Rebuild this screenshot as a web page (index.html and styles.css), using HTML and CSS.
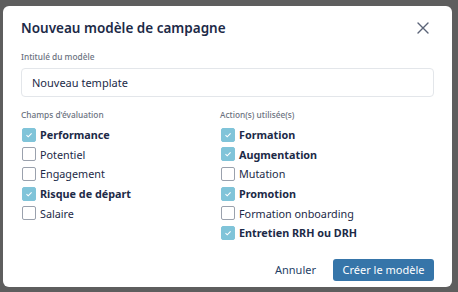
FILE: index.html
```html
<!DOCTYPE html>
<html lang="fr">
<head>
    <meta charset="UTF-8">
    <title>Nouveau modèle de campagne</title>
    <link rel="stylesheet" href="styles.css">
</head>
<body>
    <div class="modal">
        <!-- Header -->
        <div class="modal-header">
            <h2>Nouveau modèle de campagne</h2>
            <button class="close" aria-label="Fermer">
                <svg width="12" height="12" viewBox="0 0 12 12">
                    <path d="M1 1L11 11M11 1L1 11" stroke="#5b6478" stroke-width="1.4" stroke-linecap="round"/>
                </svg>
            </button>
        </div>

        <!-- Nom du modèle -->
        <label class="field-label">Intitulé du modèle</label>
        <div class="input">Nouveau template</div>

        <!-- Colonnes -->
        <div class="columns">
            <div class="column">
                <div class="field-label">Champs d'évaluation</div>
                <div class="check checked">Performance</div>
                <div class="check">Potentiel</div>
                <div class="check">Engagement</div>
                <div class="check checked">Risque de départ</div>
                <div class="check">Salaire</div>
            </div>
            <div class="column">
                <div class="field-label">Action(s) utilisée(s)</div>
                <div class="check checked">Formation</div>
                <div class="check checked">Augmentation</div>
                <div class="check">Mutation</div>
                <div class="check checked">Promotion</div>
                <div class="check">Formation onboarding</div>
                <div class="check checked">Entretien RRH ou DRH</div>
            </div>
        </div>

        <!-- Footer -->
        <div class="modal-footer">
            <button class="btn btn-link">Annuler</button>
            <button class="btn btn-primary">Créer le modèle</button>
        </div>
    </div>
</body>
</html>
```

FILE: styles.css
```css
* {
    margin: 0;
    padding: 0;
    box-sizing: border-box;
}

body {
    font-family: 'Noto Sans', 'Open Sans', sans-serif;
    background: #5e5e5e;
    height: 292px;
    padding: 6px 6px 5px 3px;
    color: #1c2a47;
}

.modal {
    background: white;
    border-radius: 6px;
    height: 281px;
    padding: 10px 18px 0 18px;
}

.modal-header {
    display: flex;
    align-items: center;
    justify-content: space-between;
    height: 24px;
    margin-bottom: 10px;
}

.modal-header h2 {
    font-size: 13.5px;
    font-weight: 600;
    color: #1c2a47;
}

.close {
    background: none;
    border: none;
    width: 20px;
    height: 20px;
    display: flex;
    align-items: center;
    justify-content: center;
    margin-right: 1px;
}

.field-label {
    display: block;
    font-size: 8.3px;
    font-weight: 500;
    color: #6b7280;
    line-height: 14px;
}

.input {
    margin-top: 4px;
    height: 29px;
    border: 1px solid #e3e6ea;
    border-radius: 4px;
    padding: 0 10px;
    font-size: 11px;
    line-height: 27px;
    color: #1c2a47;
}

.columns {
    display: grid;
    grid-template-columns: 199px 1fr;
    margin-top: 11px;
}

.column .field-label {
    margin-bottom: 3px;
}

.check {
    display: flex;
    align-items: center;
    gap: 4px;
    height: 19.6px;
    font-size: 10.8px;
    color: #1c2a47;
}

.check::before {
    content: '';
    width: 12px;
    height: 12px;
    border: 1px solid #9aa1ad;
    border-radius: 2px;
    flex-shrink: 0;
    margin-left: 1px;
}

.check.checked {
    font-weight: 700;
}

.check.checked::before {
    border-color: #80c4d9;
    background: #80c4d9 url("data:image/svg+xml,%3Csvg xmlns='http://www.w3.org/2000/svg' width='12' height='12'%3E%3Cpath d='M3.5 6.2L5.2 7.8L8.6 4.3' fill='none' stroke='white' stroke-width='1.1'/%3E%3C/svg%3E") center / 12px 12px no-repeat;
}

.modal-footer {
    display: flex;
    justify-content: flex-end;
    align-items: center;
    gap: 17px;
    margin-top: 16px;
}

.btn {
    font-family: inherit;
    font-size: 11px;
    border: none;
    cursor: pointer;
}

.btn-link {
    background: none;
    color: #1f3f66;
}

.btn-primary {
    background: #3675a9;
    color: white;
    border-radius: 3px;
    height: 22px;
    width: 101px;
}
```
